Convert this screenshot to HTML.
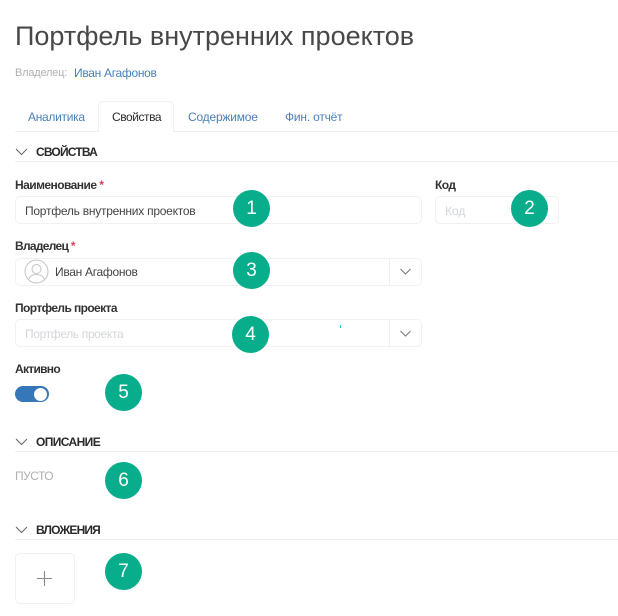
<!DOCTYPE html>
<html lang="ru">
<head>
<meta charset="utf-8">
<style>
html,body{margin:0;padding:0;background:#fff}
body{width:618px;height:616px;position:relative;overflow:hidden;font-family:"Liberation Sans",sans-serif;color:#333}
.t{position:absolute;white-space:nowrap;line-height:1}
.link{color:#4a80b8}
.lbl{font-size:12px;font-weight:700;color:#333;letter-spacing:-.55px}
.req{color:#d9415a}
.box{position:absolute;box-sizing:border-box;border:1px solid #f0f1f3;border-radius:5px;background:#fff}
.line{position:absolute;height:1px;background:#eceef0;left:15px;right:0}
.head{font-size:12px;font-weight:700;color:#2a2a2a;letter-spacing:-.8px}
.sep{position:absolute;width:1px;background:#eceef0}
.b{position:absolute;width:37px;height:37px;border-radius:50%;background:#08ad8c;color:#fff;font-size:19px;line-height:37px;text-align:center}
svg{position:absolute;overflow:visible}
</style>
</head>
<body>
<div class="t" style="left:15px;top:23px;font-size:27px;color:#484848">Портфель внутренних проектов</div>
<div class="t" style="left:15px;top:68px;font-size:11px;color:#b0b0b0;letter-spacing:-.2px">Владелец:</div>
<div class="t link" style="left:74px;top:67px;font-size:12px;letter-spacing:-.3px">Иван Агафонов</div>

<div class="line" style="top:131px"></div>
<div style="position:absolute;left:98px;top:101px;width:76px;height:31px;box-sizing:border-box;border:1px solid #f0f1f3;border-bottom:none;border-radius:5px 5px 0 0;background:#fff"></div>
<div class="t link" style="left:28px;top:111px;font-size:12px;letter-spacing:-.3px">Аналитика</div>
<div class="t" style="left:112px;top:111px;font-size:12px;color:#2b2b2b;letter-spacing:-.45px">Свойства</div>
<div class="t link" style="left:188px;top:111px;font-size:12px;letter-spacing:-.2px">Содержимое</div>
<div class="t link" style="left:285px;top:111px;font-size:12px;letter-spacing:-.2px">Фин. отчёт</div>

<svg style="left:15px;top:148px" width="13" height="8"><path d="M1 1L6.5 6.5L12 1" fill="none" stroke="#666" stroke-width="1"/></svg>
<div class="t head" style="left:36px;top:146px">СВОЙСТВА</div>
<div class="line" style="top:161px"></div>

<div class="t lbl" style="left:15px;top:179px">Наименование <span class="req">*</span></div>
<div class="box" style="left:15px;top:196px;width:407px;height:28px"></div>
<div class="t" style="left:25px;top:205px;font-size:12px;color:#444;letter-spacing:-.25px">Портфель внутренних проектов</div>

<div class="t lbl" style="left:435px;top:179px">Код</div>
<div class="box" style="left:435px;top:196px;width:124px;height:28px"></div>
<div class="t" style="left:445px;top:205px;font-size:12px;color:#d3d6da">Код</div>

<div class="t lbl" style="left:15px;top:240px;letter-spacing:-.7px">Владелец <span class="req">*</span></div>
<div class="box" style="left:15px;top:258px;width:407px;height:28px"></div>
<div class="sep" style="left:389px;top:258px;height:28px"></div>
<svg style="left:24px;top:259px" width="25" height="25" viewBox="0 0 25 25"><circle cx="12.5" cy="12.5" r="11.5" fill="#fff" stroke="#c4c4c4" stroke-width="1"/><circle cx="12.500" cy="10" r="4.500" fill="none" stroke="#c4c4c4"/><path d="M4.500 20.500C6 16.500 9 15.500 12.500 15.500S19 16.500 20.500 20.500" fill="none" stroke="#c4c4c4"/></svg>
<div class="t" style="left:55px;top:266px;font-size:12px;color:#444;letter-spacing:-.3px">Иван Агафонов</div>
<svg style="left:400px;top:268px" width="11" height="7"><path d="M.5 1L5.500 6L10.500 1" fill="none" stroke="#777" stroke-width="1"/></svg>

<div class="t lbl" style="left:15px;top:302px;letter-spacing:-.6px">Портфель проекта</div>
<div class="box" style="left:15px;top:319px;width:407px;height:28px"></div>
<div class="sep" style="left:389px;top:319px;height:28px"></div>
<div class="t" style="left:25px;top:328px;font-size:12px;color:#d3d6da;letter-spacing:-.35px">Портфель проекта</div>
<svg style="left:400px;top:330px" width="11" height="7"><path d="M.5 1L5.500 6L10.500 1" fill="none" stroke="#777" stroke-width="1"/></svg>
<div style="position:absolute;left:340px;top:325px;width:1px;height:3px;background:#2cc4a8"></div>

<div class="t lbl" style="left:15px;top:363px;letter-spacing:-.7px">Активно</div>
<div style="position:absolute;left:15px;top:386px;width:34px;height:16px;border-radius:8px;background:#3577b8"></div>
<div style="position:absolute;left:34px;top:388px;width:13px;height:13px;border-radius:50%;background:#fff"></div>

<svg style="left:15px;top:438px" width="13" height="8"><path d="M1 1L6.5 6.5L12 1" fill="none" stroke="#666" stroke-width="1"/></svg>
<div class="t head" style="left:36px;top:436px;letter-spacing:-.6px">ОПИСАНИЕ</div>
<div class="line" style="top:451px"></div>
<div class="t" style="left:15px;top:470px;font-size:12px;color:#b0b0b0;letter-spacing:-.5px">ПУСТО</div>

<svg style="left:15px;top:526px" width="13" height="8"><path d="M1 1L6.5 6.5L12 1" fill="none" stroke="#666" stroke-width="1"/></svg>
<div class="t head" style="left:36px;top:524px;letter-spacing:-.85px">ВЛОЖЕНИЯ</div>
<div class="line" style="top:539px"></div>
<div class="box" style="left:15px;top:553px;width:60px;height:51px"></div>
<svg style="left:37px;top:571px" width="16" height="16"><path d="M7.500 0V15M0 7.500H15" stroke="#888" stroke-width="1.100" fill="none"/></svg>

<div class="b" style="left:233px;top:190px">1</div>
<div class="b" style="left:511px;top:190px">2</div>
<div class="b" style="left:233px;top:252px">3</div>
<div class="b" style="left:232px;top:316px">4</div>
<div class="b" style="left:105px;top:374px">5</div>
<div class="b" style="left:105px;top:462px">6</div>
<div class="b" style="left:105px;top:553px">7</div>
</body>
</html>
